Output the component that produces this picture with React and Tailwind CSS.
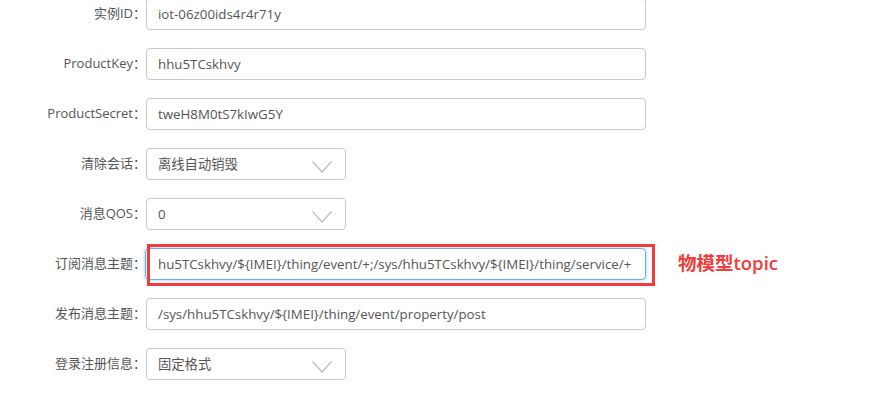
import React from "react";

const font = { fontFamily: '"Open Sans", "Noto Sans CJK SC", sans-serif' };

function Chevron() {
  return (
    <svg width="20" height="12" viewBox="0 0 20 12" className="absolute right-[13px] top-[12px]">
      <polyline points="0.5,0.5 10,11 19.5,0.5" fill="none" stroke="#bdbdbd" strokeWidth="1.2" />
    </svg>
  );
}

function Row({ label, children }) {
  return (
    <div className="flex items-center h-[32px]">
      <div className="w-[146px] shrink-0 text-right text-[13px] text-[#555] whitespace-nowrap">{label}</div>
      {children}
    </div>
  );
}

function Input({ value }) {
  return (
    <div className="w-[500px] h-[32px] border border-[#c8c8c8] rounded-[4px] px-[11px] pt-[1px] flex items-center text-[13.3px] text-[#555] whitespace-nowrap overflow-hidden bg-white">
      {value}
    </div>
  );
}

function Select({ value }) {
  return (
    <div className="relative w-[200px] h-[32px] border border-[#c8c8c8] rounded-[4px] px-[11px] pt-[1px] flex items-center text-[13.3px] text-[#555] whitespace-nowrap bg-white">
      {value}
      <Chevron />
    </div>
  );
}

export default function App() {
  return (
    <div className="w-[877px] h-[399px] bg-white overflow-hidden" style={font}>
      <div className="flex flex-col gap-[18px] mt-[-2px]">
        <Row label="实例ID：">
          <Input value="iot-06z00ids4r4r71y" />
        </Row>
        <Row label="ProductKey：">
          <Input value="hhu5TCskhvy" />
        </Row>
        <Row label="ProductSecret：">
          <Input value="tweH8M0tS7kIwG5Y" />
        </Row>
        <Row label="清除会话：">
          <Select value="离线自动销毁" />
        </Row>
        <Row label="消息QOS：">
          <Select value="0" />
        </Row>
        <Row label="订阅消息主题：">
          <div className="relative">
            <div className="w-[501px] h-[32px] ml-[-1px] border border-[#66afe9] rounded-[4px] px-[12px] pt-[1px] flex items-center text-[13.3px] text-[#555] whitespace-nowrap overflow-hidden bg-white shadow-[0_0_4px_rgba(102,175,233,0.6)]">
              hu5TCskhvy/${"{IMEI}"}/thing/event/+;/sys/hhu5TCskhvy/${"{IMEI}"}/thing/service/+
            </div>
            <div className="absolute left-[1px] top-[-4px] w-[508px] h-[42px] border-[3px] border-[#f23a3a]" />
            <div className="absolute left-[532px] top-[0px] text-[18.5px] text-[#f23a3a] whitespace-nowrap font-semibold leading-[30px]">
              物模型topic
            </div>
          </div>
        </Row>
        <Row label="发布消息主题：">
          <Input value={"/sys/hhu5TCskhvy/${IMEI}/thing/event/property/post"} />
        </Row>
        <Row label="登录注册信息：">
          <Select value="固定格式" />
        </Row>
      </div>
    </div>
  );
}
